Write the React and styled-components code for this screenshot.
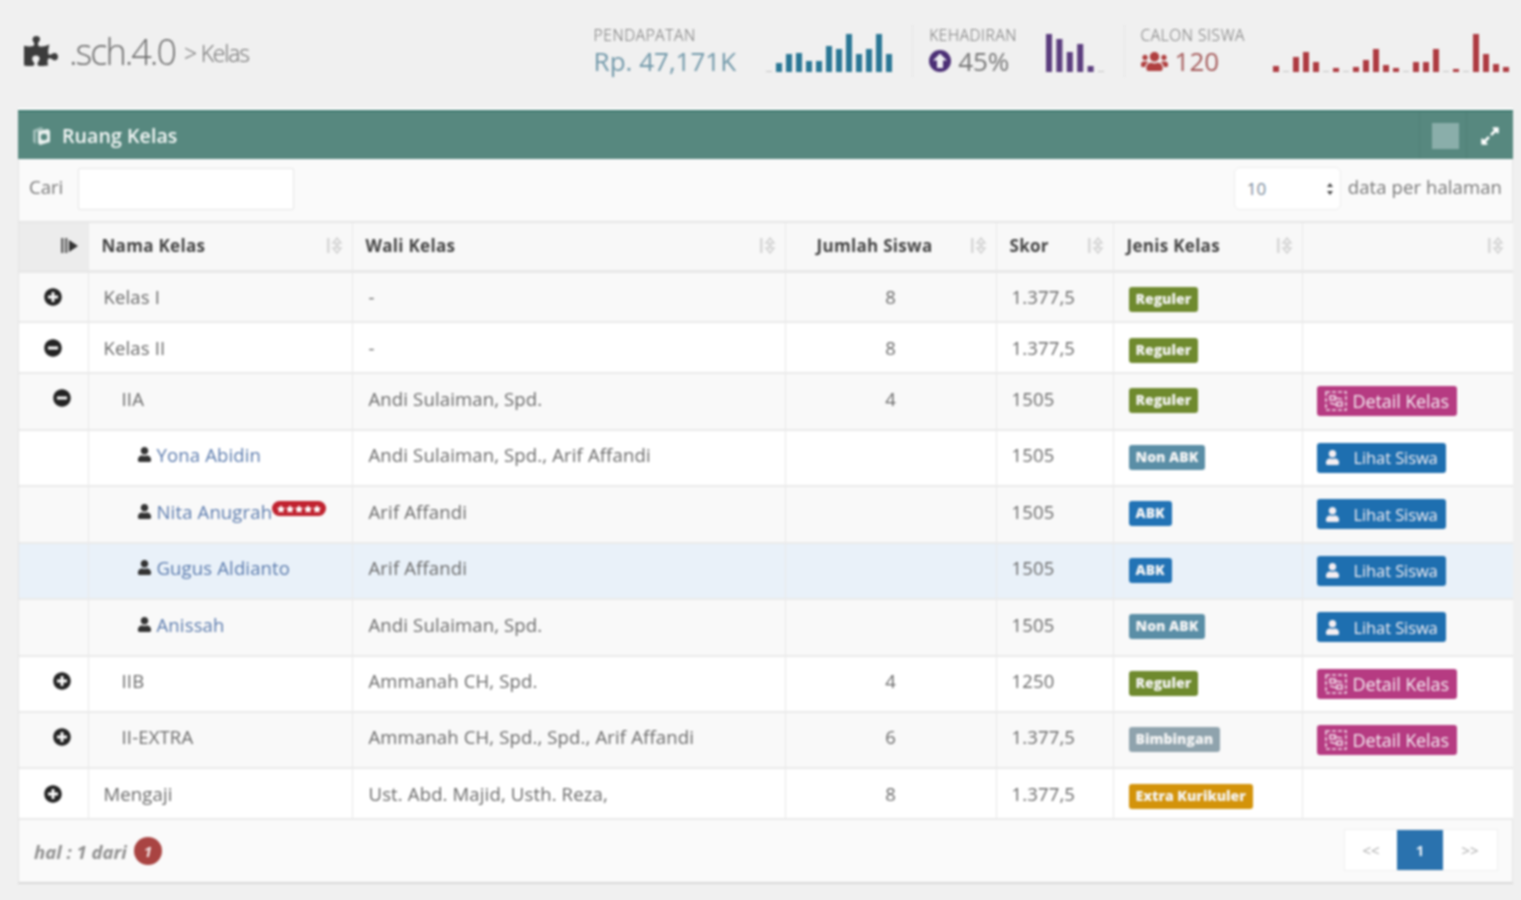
import React from 'react';
import styled, { createGlobalStyle } from 'styled-components';
import { FaPuzzlePiece, FaUsers, FaUser, FaPlusCircle, FaMinusCircle, FaExpandAlt, FaStar } from 'react-icons/fa';

const Global = createGlobalStyle`
  html, body { margin: 0; padding: 0; background: #f0f0f0; }
  body { font-family: "Open Sans", "Liberation Sans", sans-serif; color: #555; overflow: hidden; }
  * { box-sizing: border-box; }
`;

const Page = styled.div`
  width: 1521px;
  height: 900px;
  padding: 0 8px 0 18px;
  filter: blur(0.8px);
`;

const TopBar = styled.header`
  height: 110px;
  display: flex;
  align-items: center;
  justify-content: space-between;
  padding-bottom: 8px;
`;

const Brand = styled.div`
  display: flex;
  align-items: center;
  padding-left: 6px;
  color: #6b6b6b;
  svg { color: #3c3c3c; font-size: 34px; margin-right: 11px; }
`;
const BrandName = styled.span`
  font-size: 36px;
  font-weight: 300;
  letter-spacing: -2px;
  margin-right: 9px;
`;
const BrandCrumb = styled.span`
  font-size: 23px;
  font-weight: 300;
  letter-spacing: -1.2px;
  margin-top: 4px;
`;

const Stats = styled.div`
  display: flex;
  align-items: center;
`;
const Stat = styled.div`
  display: flex;
  align-items: flex-end;
  gap: ${p => p.$gap}px;
  padding: 0 ${p => p.$right}px 0 16px;
  height: 52px;
  border-left: ${p => (p.$first ? 'none' : '1px solid #e6e6e6')};
`;
const StatText = styled.div`
  display: flex;
  flex-direction: column;
`;
const StatLabel = styled.div`
  font-size: 15.5px;
  line-height: 20px;
  font-weight: 300;
  letter-spacing: 0.6px;
  color: #6d6d6d;
`;
const StatValue = styled.div`
  display: flex;
  align-items: center;
  gap: 7px;
  font-size: 26px;
  line-height: 32px;
  color: ${p => p.$color};
  svg { color: ${p => p.$icon}; font-size: 27px; flex: none; }
`;
const Spark = styled.svg`
  display: block;
  margin-bottom: 5px;
`;

const Panel = styled.section`
  width: 1495px;
  background: #fafafa;
  border: 1px solid #e4e4e4;
  border-top: none;
  border-bottom: 2px solid #d8d8d8;
  box-shadow: 0 -2px 0 #fff;
`;
const PanelHead = styled.div`
  margin: 0 -1px;
  height: 49px;
  background: #57887f;
  border-top: 2px solid #3f7a70;
  color: #f4f8f7;
  display: flex;
  align-items: center;
  padding-left: 13px;
`;
const PanelTitle = styled.div`
  flex: 1;
  display: flex;
  align-items: center;
  gap: 9px;
  font-size: 19.5px;
  font-weight: 600;
  letter-spacing: 0.1px;
`;
const PanelTool = styled.div`
  width: 47px;
  height: 100%;
  display: flex;
  align-items: center;
  justify-content: center;
  border-left: 1px solid #517f77;
  svg { font-size: 20px; color: #fff; }
`;
const ToolSquare = styled.div`
  width: 27px;
  height: 26px;
  background: #8aaeaa;
  margin-left: 4px;
`;
const Toolbar = styled.div`
  height: 62px;
  display: flex;
  align-items: center;
  padding: 0 10px 3px 10px;
  font-size: 18.5px;
  color: #777;
`;
const SearchLabel = styled.label`
  width: 49px;
  margin-top: -4px;
`;
const SearchInput = styled.input`
  width: 216px;
  height: 42px;
  background: #fff;
  border: 1px solid #e6e6e6;
  border-radius: 2px;
  outline: none;
`;
const Spacer = styled.div`
  flex: 1;
`;
const PerPage = styled.div`
  width: 107px;
  height: 43px;
  background: #fff;
  border: 1px solid #ececec;
  border-radius: 6px;
  display: flex;
  align-items: center;
  justify-content: space-between;
  padding: 0 5px 0 12px;
  font-size: 17px;
  color: #7a8a9a;
`;
const PerPageArrows = styled.svg`
  display: block;
`;
const PerPageText = styled.span`
  margin-left: 7px;
  margin-top: -4px;
  font-size: 18.5px;
  letter-spacing: 0.1px;
  color: #777;
`;

const Table = styled.table`
  width: 100%;
  table-layout: fixed;
  border-collapse: collapse;
`;
const HeadRow = styled.tr`
  height: 49px;
  background: #f8f8f8;
  border-top: 2px solid #e6e6e6;
  border-bottom: 3px solid #e8e8e8;
`;
const HeadCell = styled.th`
  position: relative;
  padding: 0 ${p => (p.$shift ? 45 : 13)}px 2px 13px;
  text-align: ${p => p.$align || 'left'};
  font-size: 17px;
  font-weight: 700;
  letter-spacing: 0.3px;
  color: #444;
  background: ${p => (p.$sorted ? '#ececec' : 'transparent')};
  border-left: 1px solid #e8e8e8;
  &:first-child { border-left: none; }
`;
const SortMark = styled.span`
  position: absolute;
  right: 7px;
  top: 12px;
`;
const Row = styled.tr`
  height: ${p => p.$h}px;
  background: ${p => p.$bg};
  border-bottom: 2px solid #eaeaea;
`;
const Cell = styled.td`
  padding: ${p => (p.$tall ? '0 15px 7px 15px' : '0 15px')};
  font-size: 18.5px;
  letter-spacing: 0.15px;
  color: #6a6a6a;
  text-align: ${p => p.$align || 'left'};
  border-left: 1px solid #e8e8e8;
  white-space: nowrap;
  &:first-child { border-left: none; }
`;
const WaliCell = styled(Cell)`
  padding-left: 16px;
`;
const ToggleCell = styled(Cell)`
  padding-left: ${p => p.$indent}px;
  padding-right: 0;
  font-size: 18px;
  color: #222;
  svg { display: block; }
`;
const BadgeCell = styled.td`
  padding: ${p => (p.$tall ? '0 14px 7px 15px' : '1px 14px 0 15px')};
  border-left: 1px solid #e8e8e8;
  white-space: nowrap;
`;
const ActionCell = styled(BadgeCell)`
  padding-left: 14px;
`;
const NameWrap = styled.div`
  display: flex;
  align-items: center;
  gap: 5px;
  padding-left: ${p => p.$indent}px;
  svg { font-size: 15px; color: #333; }
`;
const StudentLink = styled.span`
  color: #5b7bad;
`;
const Stars = styled.span`
  display: inline-flex;
  align-items: center;
  gap: 1px;
  height: 15px;
  padding: 0 5px;
  margin: -5px 0 0 -5px;
  border-radius: 8px;
  background: #c0222f;
  svg { font-size: 8px; color: #fff; }
`;
const Badge = styled.span`
  display: inline-block;
  margin-top: 5px;
  height: 25px;
  line-height: 24px;
  padding: 0 7px;
  border-radius: 3px;
  background: ${p => p.$color};
  color: #f6f6f6;
  font-size: 14px;
  font-weight: 800;
  letter-spacing: 0;
`;
const ActionButton = styled.button`
  display: inline-flex;
  align-items: center;
  gap: ${p => p.$gap}px;
  width: ${p => p.$w}px;
  height: 30px;
  margin: 6px 0 0;
  padding: 0 0 0 8px;
  border: none;
  border-radius: 3px;
  background: ${p => p.$color};
  color: #f4eef2;
  font-family: inherit;
  font-size: ${p => p.$size}px;
  letter-spacing: -0.1px;
  svg { font-size: 15px; flex: none; }
`;
const Footer = styled.div`
  height: 62px;
  display: flex;
  align-items: center;
  justify-content: space-between;
  padding: 0 15px;
`;
const PageInfo = styled.div`
  display: flex;
  align-items: center;
  gap: 7px;
  font-size: 18.5px;
  font-style: italic;
  font-weight: 700;
  color: #8f8f8f;
`;
const PageCount = styled.span`
  width: 28px;
  height: 28px;
  border-radius: 50%;
  background: #a94442;
  color: #f2e4e4;
  font-size: 15px;
  display: flex;
  align-items: center;
  justify-content: center;
`;
const Pager = styled.div`
  display: flex;
  height: 40px;
  margin-top: -2px;
  box-shadow: 0 0 0 1px #f0f0f0;
`;
const PagerItem = styled.div`
  width: ${p => p.$w}px;
  background: ${p => (p.$active ? '#2a72ae' : '#fff')};
  color: ${p => (p.$active ? '#e6eef6' : '#aaa')};
  font-size: 15px;
  font-weight: ${p => (p.$active ? 700 : 400)};
  display: flex;
  align-items: center;
  justify-content: center;
`;

const Bars = ({ values, color, step = 10, barWidth = 6, height = 40 }) => (
  <Spark width={values.length * step} height={height} viewBox={`0 0 ${values.length * step} ${height}`}>
    {values.map((v, i) => (
      <rect key={i} x={i * step} y={height - v} width={barWidth} height={v} fill={v < 2 ? '#c4c4c4' : color} />
    ))}
  </Spark>
);

const SortIcon = ({ active }) => (
  <svg width="22" height="22" viewBox="0 0 22 22" display="block">
    {active ? (
      <>
        <path d="M2 3h2.5v15H2zM6 3h2.5v15H6z" fill="#666" />
        <path d="M10 5l9 6-9 6z" fill="#333" />
      </>
    ) : (
      <>
        <path d="M4 3h2.5v15H4z" fill="#d6d6d6" />
        <path d="M14 3l4 5h-3v5h3l-4 5-4-5h3V8h-3z" fill="none" stroke="#d2d2d2" strokeWidth="1.5" />
      </>
    )}
  </svg>
);

const RoomIcon = () => (
  <svg width="22" height="22" viewBox="0 0 22 22" fill="none">
    <path d="M2 5l8-3 3 2-8 3v12l-3-2z" fill="#9dbcb7" />
    <path d="M7 6l10-2 2 2v11l-10 3-2-2z" fill="#e8f0ee" />
    <circle cx="13" cy="12" r="3.2" fill="#57887f" />
  </svg>
);

const AttendanceIcon = () => (
  <svg width="22" height="22" viewBox="0 0 22 22">
    <circle cx="11" cy="11" r="11" fill="#4b2f75" />
    <path d="M11 3.5l7 7h-4v7.5H8v-7.5H4z" fill="#eeeef2" />
  </svg>
);

const DetailIcon = () => (
  <svg width="22" height="20" viewBox="0 0 22 20" fill="none" stroke="#f1dbe8" strokeWidth="1.6">
    <rect x="1" y="1" width="20" height="18" strokeDasharray="4 2" />
    <path d="M5 5h5v4H5zM12 11h5v4h-5zM10 7l7 1M5 12l7 2" />
  </svg>
);

const cols = [69, 264, 433, 211, 117, 189, 211];
const Col = styled.col`
  width: ${p => p.$w}px;
`;
const heads = [
  { label: '', sorted: true },
  { label: 'Nama Kelas' },
  { label: 'Wali Kelas' },
  { label: 'Jumlah Siswa', align: 'center', shift: true },
  { label: 'Skor' },
  { label: 'Jenis Kelas' },
  { label: '' },
];

const BADGE = {
  reg: ['Reguler', '#6f8a2e'],
  non: ['Non ABK', '#5a8ea6'],
  abk: ['ABK', '#2273b5'],
  bim: ['Bimbingan', '#8fa3ad'],
  ext: ['Extra Kurikuler', '#d3930a'],
};

const rows = [
  { h: 51, bg: '#f9f9f9', tg: 'plus', ti: 25, name: 'Kelas I', ni: 0, wali: '-', n: '8', skor: '1.377,5', b: 'reg' },
  { h: 51, bg: '#ffffff', tg: 'minus', ti: 25, name: 'Kelas II', ni: 0, wali: '-', n: '8', skor: '1.377,5', b: 'reg' },
  { h: 57, bg: '#f9f9f9', tg: 'minus', ti: 34, name: 'IIA', ni: 18, wali: 'Andi Sulaiman, Spd.', n: '4', skor: '1505', b: 'reg', act: 'detail' },
  { h: 56, bg: '#ffffff', name: 'Yona Abidin', st: true, wali: 'Andi Sulaiman, Spd., Arif Affandi', skor: '1505', b: 'non', act: 'siswa' },
  { h: 57, bg: '#f9f9f9', name: 'Nita Anugrah', st: true, stars: true, wali: 'Arif Affandi', skor: '1505', b: 'abk', act: 'siswa' },
  { h: 56, bg: '#e9f1f9', name: 'Gugus Aldianto', st: true, wali: 'Arif Affandi', skor: '1505', b: 'abk', act: 'siswa' },
  { h: 57, bg: '#f9f9f9', name: 'Anissah', st: true, wali: 'Andi Sulaiman, Spd.', skor: '1505', b: 'non', act: 'siswa' },
  { h: 56, bg: '#ffffff', tg: 'plus', ti: 34, name: 'IIB', ni: 18, wali: 'Ammanah CH, Spd.', n: '4', skor: '1250', b: 'reg', act: 'detail' },
  { h: 56, bg: '#f9f9f9', tg: 'plus', ti: 34, name: 'II-EXTRA', ni: 18, wali: 'Ammanah CH, Spd., Spd., Arif Affandi', n: '6', skor: '1.377,5', b: 'bim', act: 'detail' },
  { h: 51, bg: '#ffffff', tg: 'plus', ti: 25, name: 'Mengaji', ni: 0, wali: 'Ust. Abd. Majid, Usth. Reza,', n: '8', skor: '1.377,5', b: 'ext' },
];

const sparkA = [1, 9, 18, 19, 11, 11, 26, 23, 38, 18, 23, 38, 18];
const sparkB = [38, 33, 20, 28, 6, 1];
const sparkC = [6, 1, 15, 20, 10, 1, 4, 1, 5, 12, 23, 7, 4, 1, 10, 10, 23, 1, 3, 1, 38, 18, 8, 5];

export default function App() {
  return (
    <Page>
      <Global />
      <TopBar>
        <Brand>
          <FaPuzzlePiece />
          <BrandName>.sch.4.0</BrandName>
          <BrandCrumb>&gt; Kelas</BrandCrumb>
        </Brand>
        <Stats>
          <Stat $first $gap={30} $right={16}>
            <StatText>
              <StatLabel>PENDAPATAN</StatLabel>
              <StatValue $color="#7198a9">Rp. 47,171K</StatValue>
            </StatText>
            <Bars values={sparkA} color="#2a7795" />
          </Stat>
          <Stat $gap={29} $right={15}>
            <StatText>
              <StatLabel>KEHADIRAN</StatLabel>
              <StatValue $color="#777"><AttendanceIcon />45%</StatValue>
            </StatText>
            <Bars values={sparkB} color="#5b3d7e" step={10.4} />
          </Stat>
          <Stat $gap={28} $right={0}>
            <StatText>
              <StatLabel>CALON SISWA</StatLabel>
              <StatValue $color="#a45a5a" $icon="#b04040"><FaUsers />120</StatValue>
            </StatText>
            <Bars values={sparkC} color="#ae3b41" />
          </Stat>
        </Stats>
      </TopBar>

      <Panel>
        <PanelHead>
          <PanelTitle><RoomIcon />Ruang Kelas</PanelTitle>
          <PanelTool><ToolSquare /></PanelTool>
          <PanelTool><FaExpandAlt /></PanelTool>
        </PanelHead>
        <Toolbar>
          <SearchLabel>Cari</SearchLabel>
          <SearchInput aria-label="Cari" />
          <Spacer />
          <PerPage>
            10
            <PerPageArrows width="10" height="16" viewBox="0 0 10 16">
              <path d="M5 2l3 4H2zM5 14l3-4H2z" fill="#444" />
            </PerPageArrows>
          </PerPage>
          <PerPageText>data per halaman</PerPageText>
        </Toolbar>
        <Table>
          <colgroup>
            {cols.map((w, i) => <Col key={i} $w={w} />)}
          </colgroup>
          <thead>
            <HeadRow>
              {heads.map((h, i) => (
                <HeadCell key={i} $align={h.align} $sorted={h.sorted} $shift={h.shift}>
                  {h.label}
                  <SortMark><SortIcon active={h.sorted} /></SortMark>
                </HeadCell>
              ))}
            </HeadRow>
          </thead>
          <tbody>
            {rows.map(r => {
              const tall = r.h > 51;
              return (
                <Row key={r.name} $h={r.h} $bg={r.bg}>
                  <ToggleCell $tall={tall} $indent={r.ti || 0}>
                    {r.tg === 'plus' && <FaPlusCircle />}
                    {r.tg === 'minus' && <FaMinusCircle />}
                  </ToggleCell>
                  <Cell $tall={tall}>
                    {r.st ? (
                      <NameWrap $indent={33}>
                        <FaUser />
                        <StudentLink>{r.name}</StudentLink>
                        {r.stars && (
                          <Stars>
                            <FaStar /><FaStar /><FaStar /><FaStar /><FaStar />
                          </Stars>
                        )}
                      </NameWrap>
                    ) : (
                      <NameWrap $indent={r.ni}>{r.name}</NameWrap>
                    )}
                  </Cell>
                  <WaliCell $tall={tall}>{r.wali}</WaliCell>
                  <Cell $tall={tall} $align="center">{r.n}</Cell>
                  <Cell $tall={tall}>{r.skor}</Cell>
                  <BadgeCell $tall={tall}>
                    <Badge $color={BADGE[r.b][1]}>{BADGE[r.b][0]}</Badge>
                  </BadgeCell>
                  <ActionCell $tall={tall}>
                    {r.act === 'detail' && (
                      <ActionButton $color="#b63b82" $w={140} $gap={6} $size={18}><DetailIcon />Detail Kelas</ActionButton>
                    )}
                    {r.act === 'siswa' && (
                      <ActionButton $color="#1e6fb0" $w={129} $gap={14} $size={16.5}><FaUser />Lihat Siswa</ActionButton>
                    )}
                  </ActionCell>
                </Row>
              );
            })}
          </tbody>
        </Table>
        <Footer>
          <PageInfo>hal : 1 dari <PageCount>1</PageCount></PageInfo>
          <Pager>
            <PagerItem $w={52}>&lt;&lt;</PagerItem>
            <PagerItem $w={46} $active>1</PagerItem>
            <PagerItem $w={54}>&gt;&gt;</PagerItem>
          </Pager>
        </Footer>
      </Panel>
    </Page>
  );
}
